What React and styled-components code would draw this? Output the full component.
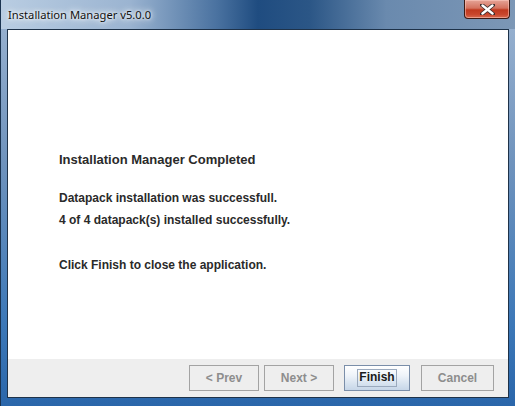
import React from "react";
import styled, {createGlobalStyle} from "styled-components";

const GlobalStyle = createGlobalStyle`
  html, body {
    margin: 0;
    padding: 0;
    background: #1b3a5c;
  }
`

const Window = styled.div`
  width: 515px;
  height: 406px;
  box-sizing: border-box;
  display: flex;
  flex-direction: column;
  border-left: 1px solid #1a3350;
  background: linear-gradient(180deg, #9db5d2 0%, #6f93bd 40%, #3c78b8 80%, #2a66aa 100%);
  overflow: hidden;
`

const TitleBar = styled.div`
  height: 29px;
  flex-shrink: 0;
  display: flex;
  align-items: flex-start;
  padding-left: 7px;
  background: linear-gradient(90deg, #b9cde2 0%, #9bb4d1 25%, #4a72a0 42%, #1f4c80 50%, #2b5686 60%, #6a8aae 75%, #7c97b6 100%);
`

const Title = styled.span`
  margin-top: 7px;
  font-family: "Noto Sans", "Open Sans", sans-serif;
  font-size: 11.2px;
  color: #111;
  text-shadow: 0 0 6px #fff, 0 0 8px #e8f0f8, 0 0 3px #fff;
`

const CloseButton = styled.div`
  margin-left: auto;
  margin-right: 5px;
  width: 46px;
  height: 19px;
  box-sizing: border-box;
  border: 1px solid #3d1a14;
  border-top: none;
  border-radius: 0 0 4px 4px;
  background: linear-gradient(180deg, #e5a497 0%, #d4725f 45%, #c0391f 55%, #c9462c 80%, #d76a4f 100%);
  box-shadow: inset 0 0 0 1px rgba(255, 210, 200, 0.5);
  display: flex;
  align-items: center;
  justify-content: center;
`

const Client = styled.div`
  flex: 1;
  margin: 0 6px 8px 6px;
  border: 1px solid #1e3249;
  display: flex;
  flex-direction: column;
  background: #eeeeee;
`

const ContentPanel = styled.div`
  flex: 1;
  background: #ffffff;
  padding: 122px 0 0 51px;
  font-family: "Liberation Sans", Arial, sans-serif;
  font-weight: bold;
  color: #2a2a2a;
`

const Heading = styled.div`
  font-size: 13px;
  line-height: 15px;
  margin-bottom: 24px;
`

const Line = styled.div`
  font-size: 12px;
  line-height: 14px;
  margin-bottom: ${props => props.gap || 8}px;
`

const ButtonBar = styled.div`
  height: 38px;
  flex-shrink: 0;
  display: flex;
  justify-content: flex-end;
  align-items: flex-start;
  padding: 6px 14px 0 0;
  box-sizing: border-box;
`

const Button = styled.button`
  width: ${props => props.w}px;
  height: 26px;
  margin-left: ${props => props.gap}px;
  padding: 0;
  font-family: "Liberation Sans", Arial, sans-serif;
  font-weight: bold;
  font-size: 12px;
  border: 1px solid ${props => props.primary ? '#7a8ea9' : '#a3a3a3'};
  background: ${props => props.primary
    ? 'linear-gradient(180deg, #ffffff 0%, #eef3f9 40%, #d6e2ef 75%, #c7d6e8 100%)'
    : '#eeeeee'};
  color: ${props => props.disabled ? '#8d8d8d' : '#1a1a1a'};
  display: flex;
  align-items: center;
  justify-content: center;
`

const Focus = styled.span`
  border: 1px solid #9aa9bd;
  padding: 1px 1px 2px;
  line-height: 13px;
`

const CloseIcon = () => (
    <svg width="15" height="11" viewBox="0 0 15 11">
        <path d="M2 1 L13 10 M13 1 L2 10" stroke="#3a2a2a" strokeWidth="4" strokeLinecap="round"/>
        <path d="M2.5 1.5 L12.5 9.5 M12.5 1.5 L2.5 9.5" stroke="#ffffff" strokeWidth="2.4" strokeLinecap="round"/>
    </svg>
)

export default function App() {
    return (
        <Window>
            <GlobalStyle/>
            <TitleBar>
                <Title>Installation Manager v5.0.0</Title>
                <CloseButton><CloseIcon/></CloseButton>
            </TitleBar>
            <Client>
                <ContentPanel>
                    <Heading>Installation Manager Completed</Heading>
                    <Line>Datapack installation was successfull.</Line>
                    <Line gap={31}>4 of 4 datapack(s) installed successfully.</Line>
                    <Line>Click Finish to close the application.</Line>
                </ContentPanel>
                <ButtonBar>
                    <Button w={70} gap={0} disabled>&lt; Prev</Button>
                    <Button w={70} gap={5} disabled>Next &gt;</Button>
                    <Button w={66} gap={10} primary><Focus>Finish</Focus></Button>
                    <Button w={73} gap={11} disabled>Cancel</Button>
                </ButtonBar>
            </Client>
        </Window>
    )
}
